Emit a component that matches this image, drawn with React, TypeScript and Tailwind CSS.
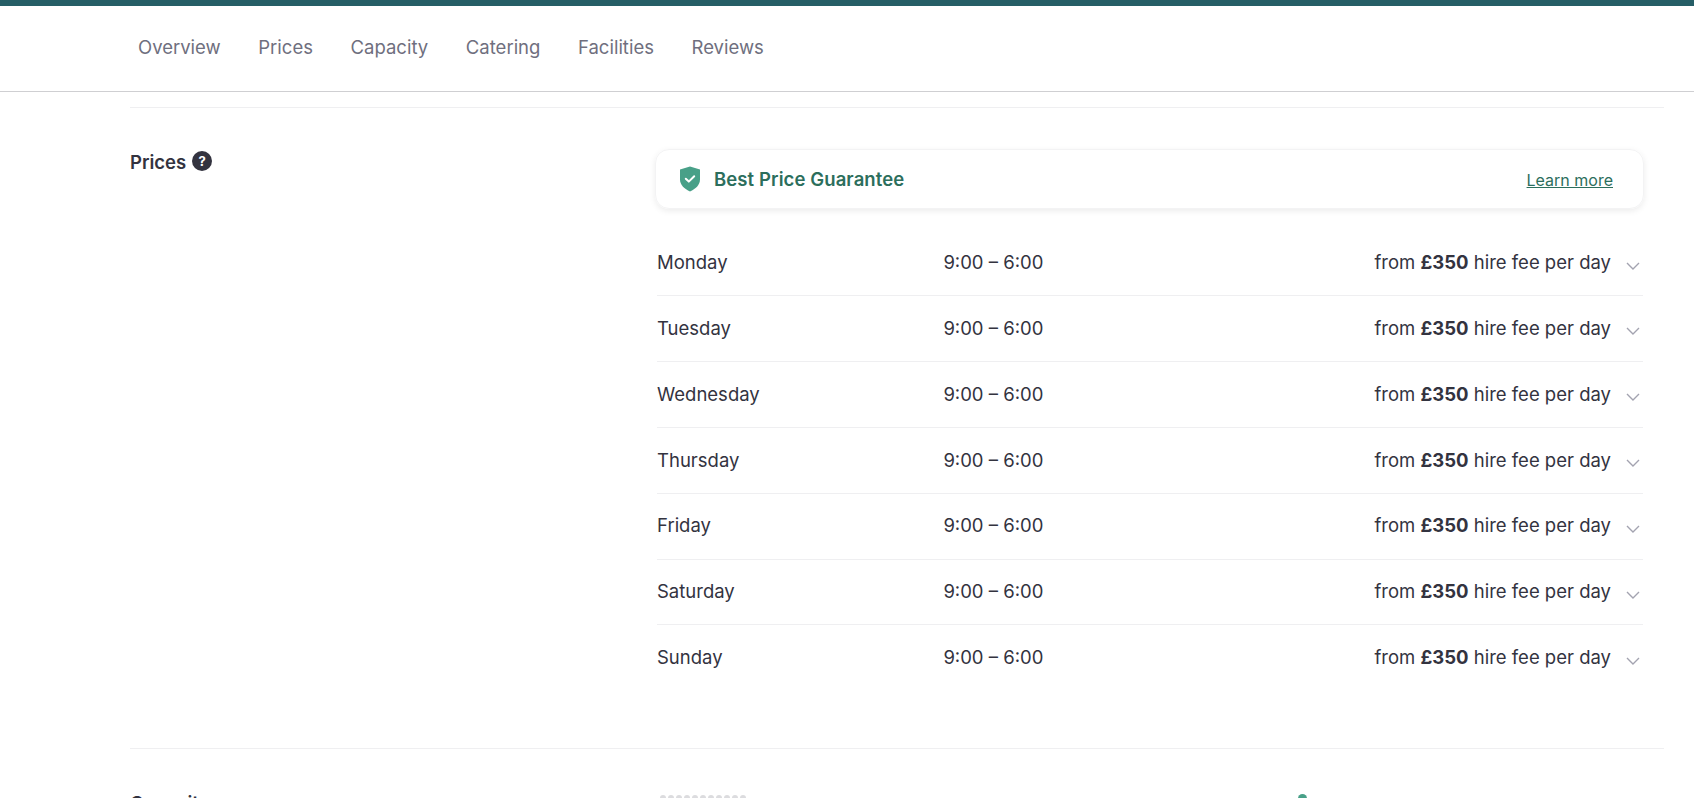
const navItems = ["Overview", "Prices", "Capacity", "Catering", "Facilities", "Reviews"];
const days = ["Monday", "Tuesday", "Wednesday", "Thursday", "Friday", "Saturday", "Sunday"];

const ShieldIcon = () => (
  <svg width="22" height="26" viewBox="0 0 22 26" className="shrink-0">
    <path d="M11 0.5 L21 3.6 V13.5 C21 19 16.5 23 11 25.5 C5.5 23 1 19 1 13.5 V3.6 Z" fill="#48a088" />
    <path d="M6.8 12.8 L9.8 15.6 L15.2 10.2" fill="none" stroke="#fff" strokeWidth="2" strokeLinecap="round" strokeLinejoin="round" />
  </svg>
);

const Chevron = () => (
  <svg width="14" height="8" viewBox="0 0 14 8" className="mt-[5px] shrink-0">
    <path d="M1 1 L7 7 L13 1" fill="none" stroke="#a3a3b0" strokeWidth="1.4" />
  </svg>
);

const App = () => {
  return (
    <div className="h-[798px] overflow-hidden bg-white font-['Inter',sans-serif] text-[#33333f]">
      <header className="h-[92px] border-t-[6px] border-b border-t-[#265e66] border-b-[#cfcfd2]">
        <nav className="flex h-[85px] items-center gap-[37.6px] pb-px pl-[138px] text-[18.5px] text-[#6f6f7e]">
          {navItems.map((item) => (
            <span key={item}>{item}</span>
          ))}
        </nav>
      </header>

      <main className="pr-[30px] pl-[130px]">
        <div className="mt-[15px] border-t border-[#efeff1]" />

        <section className="flex h-[641px] border-b border-[#efeff1] pt-[41px]">
          <div className="w-[525px] shrink-0">
            <h2 className="mt-px flex items-center gap-[6px] text-[18.5px] leading-[24px] font-semibold">
              Prices
              <span className="-mt-[2px] flex h-[20px] w-[20px] items-center justify-center rounded-full bg-[#33333f] text-[13px] font-bold text-white">
                ?
              </span>
            </h2>
          </div>

          <div className="w-[989px]">
            <div className="flex h-[60px] items-center justify-between rounded-[14px] border border-[#f3f3f4] pr-[30px] pl-[23px] shadow-[0_2px_6px_rgba(0,0,0,0.08)]">
              <div className="flex items-center gap-[13px]">
                <ShieldIcon />
                <span className="mt-px text-[18.5px] font-semibold tracking-[0.1px] text-[#2c6e5c]">Best Price Guarantee</span>
              </div>
              <a className="mt-[2px] text-[16px] text-[#2c6e5c] underline">Learn more</a>
            </div>

            <ul className="mt-[21.7px] mr-px ml-[2px]">
              {days.map((day) => (
                <li
                  key={day}
                  className="flex h-[65.8px] items-center border-b border-[#efeff1] text-[18.5px] last:border-b-0"
                >
                  <span className="w-[286.4px]">{day}</span>
                  <span>9:00 – 6:00</span>
                  <span className="ml-auto">
                    from <b className="font-bold">£350</b> hire fee per day
                  </span>
                  <span className="mr-[3px] ml-[15px] flex">
                    <Chevron />
                  </span>
                </li>
              ))}
            </ul>
          </div>
        </section>

        <section className="flex pt-[42px]">
          <h2 className="w-[530px] shrink-0 text-[18.5px] leading-[24px] font-semibold">Capacity</h2>
          <div className="flex w-[638px] gap-[2px] pt-[4px]">
            {Array.from({ length: 11 }).map((_, i) => (
              <span key={i} className="h-[6px] w-[6px] rounded-full bg-[#dcdcdf]" />
            ))}
          </div>
          <span className="mt-[3px] h-[9px] w-[9px] rounded-full bg-[#48a088]" />
        </section>
      </main>
    </div>
  );
};

export default App;
